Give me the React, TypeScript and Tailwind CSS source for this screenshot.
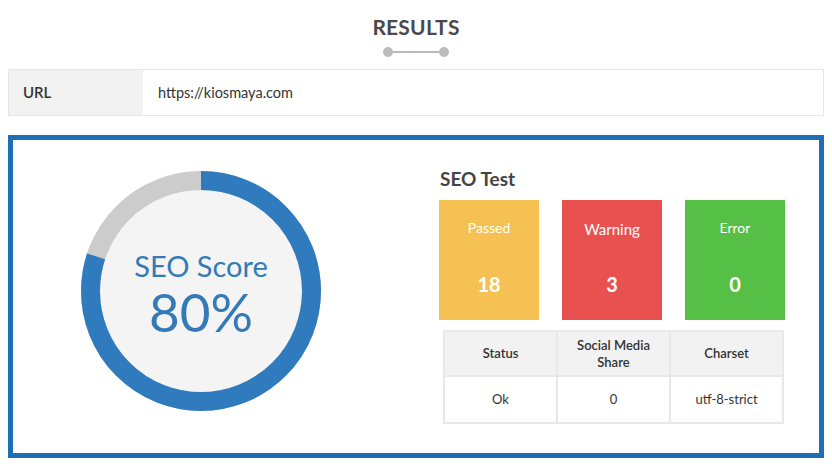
import React from "react";

const font = { fontFamily: "Lato, 'Open Sans', 'Liberation Sans', sans-serif" };

function ScoreRing({ value }: { value: number }) {
  const size = 240;
  const stroke = 19;
  const r = (size - stroke) / 2;
  const c = 2 * Math.PI * r;
  return (
    <div className="relative w-[240px] h-[240px]">
      <svg width={size} height={size} className="block">
        <circle cx={size / 2} cy={size / 2} r={r} fill="#f4f4f4" stroke="#cccccc" strokeWidth={stroke} />
        <circle
          cx={size / 2}
          cy={size / 2}
          r={r}
          fill="none"
          stroke="#307bbe"
          strokeWidth={stroke}
          strokeDasharray={`${(c * value) / 100} ${c}`}
          transform={`rotate(-90 ${size / 2} ${size / 2})`}
        />
      </svg>
      <div className="absolute inset-0 flex flex-col items-center justify-center text-[#337ab7]">
        <div className="text-[29px] leading-none mt-[6px]">SEO Score</div>
        <div className="text-[53px] leading-none mt-[5px]">{value}%</div>
      </div>
    </div>
  );
}

function StatBox({ label, value, color, labelClass }: { label: string; value: string; color: string; labelClass: string }) {
  return (
    <div className={`w-[100px] h-[120px] ${color} text-white flex flex-col items-center`}>
      <div className={labelClass}>{label}</div>
      <div className="mt-auto mb-[26px] text-[20px] font-bold leading-none">{value}</div>
    </div>
  );
}

export default function App() {
  return (
    <div className="w-[832px] h-[470px] bg-white text-[#333]" style={font}>
      <div className="pt-[16px] flex flex-col items-center">
        <h1 className="text-[21px] font-bold leading-[22px] text-[#4a4a4a] tracking-[0.2px]">RESULTS</h1>
        <div className="mt-[9px] flex items-center">
          <span className="w-[10px] h-[10px] rounded-full bg-[#bbbbbb]" />
          <span className="w-[46px] h-[2px] bg-[#bbbbbb]" />
          <span className="w-[10px] h-[10px] rounded-full bg-[#bbbbbb]" />
        </div>
      </div>

      <div className="mx-[8px] mt-[12px] h-[47px] flex border border-[#e6e6e6]">
        <div className="w-[134px] bg-[#f2f2f2] flex items-center pl-[14px] text-[15px] font-semibold text-[#333]">URL</div>
        <div className="flex-1 flex items-center pl-[15px] text-[14.5px] text-[#333]">https://kiosmaya.com</div>
      </div>

      <div className="mx-[8px] mt-[19px] h-[323px] border-[5px] border-[#1f6fb5] flex">
        <div className="w-[412px] pl-[68px] pt-[31px]">
          <ScoreRing value={80} />
        </div>
        <div className="pl-[9px] pt-[28px]">
          <h2 className="text-[19px] font-bold leading-[22px] text-[#444] ml-[6px]">SEO Test</h2>
          <div className="mt-[10px] ml-[5px] flex gap-[23px]">
            <StatBox label="Passed" value="18" color="bg-[#f6c153]" labelClass="mt-[17px] text-[14px]" />
            <StatBox label="Warning" value="3" color="bg-[#e95151]" labelClass="mt-[18px] text-[15px]" />
            <StatBox label="Error" value="0" color="bg-[#56c046]" labelClass="mt-[17px] text-[14px]" />
          </div>
          <table className="mt-[10px] ml-[9px] border-collapse text-[13px] text-[#333] text-center">
            <thead>
              <tr className="bg-[#f2f2f2] h-[45px]">
                <th className="w-[113px] border-2 border-[#e8e8e8] font-semibold leading-[17px]">Status</th>
                <th className="w-[113px] border-2 border-[#e8e8e8] font-semibold leading-[17px]">Social Media<br />Share</th>
                <th className="w-[113px] border-2 border-[#e8e8e8] font-semibold leading-[17px]">Charset</th>
              </tr>
            </thead>
            <tbody>
              <tr className="h-[47px]">
                <td className="border-2 border-[#e8e8e8]">Ok</td>
                <td className="border-2 border-[#e8e8e8]">0</td>
                <td className="border-2 border-[#e8e8e8]">utf-8-strict</td>
              </tr>
            </tbody>
          </table>
        </div>
      </div>
    </div>
  );
}
